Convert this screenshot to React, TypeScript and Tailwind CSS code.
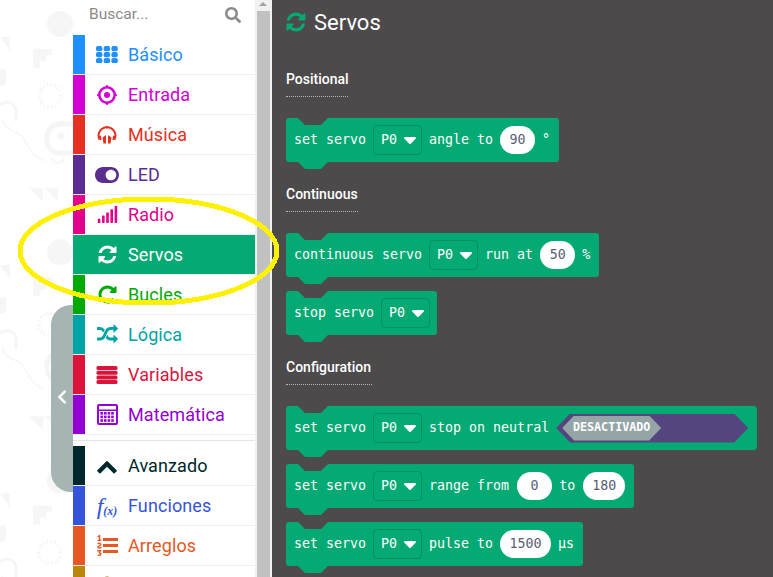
import React from 'react';
import { FaSearch, FaSignal, FaToggleOn, FaChevronLeft, FaFont } from 'react-icons/fa';

// older font awesome glyphs, the toolbox was drawn with these
const SYNC = 'M1639 1056q0 5-1 7-64 268-268 434.5t-478 166.5q-146 0-282.5-55t-243.5-157l-129 129q-19 19-45 19t-45-19-19-45v-448q0-26 19-45t45-19h448q26 0 45 19t19 45-19 45l-137 137q71 66 161 102t187 36q134 0 250-65t186-179q11-17 53-117 8-23 30-23h192q13 0 22.5 9.5t9.5 22.5zm25-800v448q0 26-19 45t-45 19h-448q-26 0-45-19t-19-45 19-45l138-138q-148-137-349-137-134 0-250 65t-186 179q-11 17-53 117-8 23-30 23h-199q-13 0-22.5-9.5t-9.5-22.5v-7q65-268 270-434.5t480-166.5q146 0 284 55.5t245 156.5l130-129q19-19 45-19t45 19 19 45z';
const REPEAT = 'M1664 256v448q0 26-19 45t-45 19h-448q-42 0-59-40-17-39 14-69l138-138q-148-137-349-137-104 0-198.5 40.5t-163.5 109.5-109.5 163.5-40.5 198.5 40.5 198.5 109.5 163.5 163.5 109.5 198.5 40.5q119 0 225-52t179-147q7-10 23-12 15 0 25 9l137 138q9 8 9.5 20.5t-7.5 22.5q-109 132-264 204.5t-327 72.5q-156 0-298-61t-245-164-164-245-61-298 61-298 164-245 245-164 298-61q147 0 284.5 55.5t244.5 156.5l130-129q29-31 70-14 39 17 39 59z';
const RANDOM = 'M666 481q-60 92-137 273-22-45-37-72.5t-40.5-63.5-51-56.5-63-35-81.5-14.5h-224q-14 0-23-9t-9-23v-192q0-14 9-23t23-9h224q250 0 410 225zm1126 799q0 14-9 23l-320 320q-9 9-23 9-13 0-22.5-9.5t-9.5-22.5v-192q-32 0-85 .5t-81 1-73-1-71-5-64-10.5-63-18.5-58-28.5-59-40-55-53.5-56-69.5q59-93 136-273 22 45 37 72.5t40.5 63.5 51 56.5 63 35 81.5 14.5h256v-192q0-14 9-23t23-9q12 0 24 10l319 319q9 9 9 23zm0-896q0 14-9 23l-320 320q-9 9-23 9-13 0-22.5-9.5t-9.5-22.5v-192h-256q-48 0-87 15t-69 45-51 61.5-45 77.5q-32 62-78 171-29 66-49.5 111t-54 105-64 100-74 83-90 68.5-106.5 42-128 16.5h-224q-14 0-23-9t-9-23v-192q0-14 9-23t23-9h224q48 0 87-15t69-45 51-61.5 45-77.5q32-62 78-171 29-66 49.5-111t54-105 64-100 74-83 90-68.5 106.5-42 128-16.5h256v-192q0-14 9-23t23-9q12 0 24 10l319 319q9 9 9 23z';
const LIST_OL = 'M381 1620q0 80-54.5 126t-135.5 46q-106 0-172-66l57-88q49 45 106 45 29 0 50.5-14.5t21.5-42.5q0-64-105-56l-26-56q8-10 32.5-43.5t42.5-54 37-38.5v-1q-16 0-48.5 1t-48.5 1v53h-106v-152h333v88l-95 115q51 12 81 49t30 88zm2-627v159h-362q-6-36-6-54 0-51 23.5-93t56.5-68 66-47.5 56.5-43.5 23.5-45q0-25-14.5-38.5t-39.5-13.5q-46 0-81 58l-85-59q24-51 71.5-79.5t105.5-28.5q73 0 123 41.5t50 112.5q0 50-34 91.5t-75 64.5-75.5 50.5-35.5 52.5h127v-60h105zm1409 319v192q0 13-9.5 22.5t-22.5 9.5h-1216q-13 0-22.5-9.5t-9.5-22.5v-192q0-14 9-23t23-9h1216q13 0 22.5 9.5t9.5 22.5zm-1408-899v99h-335v-99h107q0-41 .5-122t.5-121v-12h-2q-8 17-50 54l-71-76 136-127h106v404h108zm1408 387v192q0 13-9.5 22.5t-22.5 9.5h-1216q-13 0-22.5-9.5t-9.5-22.5v-192q0-14 9-23t23-9h1216q13 0 22.5 9.5t9.5 22.5zm0-512v192q0 13-9.5 22.5t-22.5 9.5h-1216q-13 0-22.5-9.5t-9.5-22.5v-192q0-14 9-23t23-9h1216q13 0 22.5 9.5t9.5 22.5z';
const CHEVRON_UP = 'M1683 1331l-166 165q-19 19-45 19t-45-19l-531-531-531 531q-19 19-45 19t-45-19l-166-165q-19-19-19-45.5t19-45.5l742-741q19-19 45-19t45 19l742 741q19 19 19 45.5t-19 45.5z';

function Glyph({ d, size, className }: { d: string; size: number; className?: string }) {
  return (
    <svg width={size} height={size} viewBox="0 0 1792 1792" fill="currentColor" className={className}>
      <path d={d} />
    </svg>
  );
}

function BasicIcon() {
  const cells = [0, 1, 2, 3, 4, 5, 6, 7, 8];
  return (
    <svg width="22" height="17" viewBox="0 0 22 17" fill="currentColor">
      {cells.map((i) => (
        <rect key={i} x={(i % 3) * 7.7} y={Math.floor(i / 3) * 6} width="6.4" height="5.2" rx="2" />
      ))}
    </svg>
  );
}

function TargetIcon() {
  return (
    <svg width="20" height="20" viewBox="0 0 20 20" fill="currentColor">
      <circle cx="10" cy="10" r="7.7" fill="none" stroke="currentColor" strokeWidth="2.6" />
      <circle cx="10" cy="10" r="3" />
      <rect x="9.2" y="0" width="1.6" height="2" />
      <rect x="9.2" y="18" width="1.6" height="2" />
      <rect x="0" y="9.2" width="2" height="1.6" />
      <rect x="18" y="9.2" width="2" height="1.6" />
    </svg>
  );
}

function HeadphoneIcon() {
  return (
    <svg width="20" height="18" viewBox="0 0 20 18" fill="currentColor">
      <path d="M2.6 13.5A8.4 8.4 0 1 1 17.4 13.5" fill="none" stroke="currentColor" strokeWidth="2" />
      <rect x="9.3" y="0" width="1.4" height="2.5" />
      <polygon points="1,10.5 4,9.5 4.5,14 2.8,14" />
      <polygon points="19,10.5 16,9.5 15.5,14 17.2,14" />
      <polygon points="5.5,11.5 9,9 9,17.5 6.5,17.5" />
      <polygon points="14.5,11.5 11,9 11,17.5 13.5,17.5" />
    </svg>
  );
}

function VariablesIcon() {
  return (
    <svg width="22" height="18" viewBox="0 0 22 18" fill="currentColor">
      <rect x="0.5" y="0" width="21" height="4" rx="1.5" />
      <rect x="0.5" y="4.7" width="21" height="4" rx="1.5" />
      <rect x="0.5" y="9.4" width="21" height="4" rx="1.5" />
      <rect x="0.5" y="14" width="21" height="4" rx="1.5" />
    </svg>
  );
}

function CalcIcon() {
  const cells = [0, 1, 2, 3, 4, 5, 6, 7, 8, 9, 10, 11];
  return (
    <svg width="21" height="21" viewBox="0 0 21 21" fill="currentColor">
      <path d="M2 0h17a2 2 0 0 1 2 2v17a2 2 0 0 1-2 2H2a2 2 0 0 1-2-2V2a2 2 0 0 1 2-2zm0 2v3.5h17V2H2zm0 5v12h17V7H2z" fillRule="evenodd" />
      {cells.map((i) => (
        <rect key={i} x={3.4 + (i % 4) * 3.6} y={8 + Math.floor(i / 4) * 3.6} width="2.6" height="2.6" />
      ))}
    </svg>
  );
}

function FuncIcon() {
  return (
    <span className="flex items-end font-['Liberation_Serif',serif] italic leading-none">
      <span className="text-[24px] leading-none">f</span>
      <span className="text-[12px] font-bold leading-none mb-[1px]">(x)</span>
    </span>
  );
}

const mainRows = [
  { label: 'Básico', color: '#1e90ff', icon: <BasicIcon /> },
  { label: 'Entrada', color: '#d400d4', icon: <TargetIcon /> },
  { label: 'Música', color: '#e63022', icon: <HeadphoneIcon /> },
  { label: 'LED', color: '#5c2d91', icon: <FaToggleOn size={24} /> },
  { label: 'Radio', color: '#e3008c', icon: <FaSignal size={21} /> },
  { label: 'Servos', color: '#04a973', icon: <Glyph d={SYNC} size={21} />, active: true },
  { label: 'Bucles', color: '#00aa00', icon: <Glyph d={REPEAT} size={21} /> },
  { label: 'Lógica', color: '#00a4a6', icon: <Glyph d={RANDOM} size={21} /> },
  { label: 'Variables', color: '#dc143c', icon: <VariablesIcon /> },
  { label: 'Matemática', color: '#9400d3', icon: <CalcIcon /> },
];

const advancedRows = [
  { label: 'Avanzado', color: '#00272b', icon: <Glyph d={CHEVRON_UP} size={22} /> },
  { label: 'Funciones', color: '#3455db', icon: <FuncIcon /> },
  { label: 'Arreglos', color: '#e65722', icon: <Glyph d={LIST_OL} size={21} /> },
  // only the tip of this row's icon is on screen
  { label: '', color: '#b8860b', icon: <FaFont size={22} /> },
];

function ToolboxRow({ label, color, icon, active }: { label: string; color: string; icon: React.ReactNode; active?: boolean }) {
  return (
    <div
      className="h-[40px] shrink-0 flex items-stretch border-b border-[#eeeeee]"
      style={{ color: active ? '#ffffff' : color, backgroundColor: active ? color : undefined }}
    >
      <div className="w-[12px] shrink-0" style={{ backgroundColor: color }} />
      <div className="w-[43px] shrink-0 flex items-center justify-center pl-[1px]">{icon}</div>
      <span className="text-[18px] leading-[40px] tracking-[0.1px]">{label}</span>
    </div>
  );
}

function Dropdown() {
  return (
    <div className="w-[49px] h-[30px] shrink-0 flex items-center pl-[7px] gap-[7px] rounded-[4px] border border-[#038f61]">
      <span>P0</span>
      <svg width="12" height="7" viewBox="0 0 12 7" fill="#ffffff">
        <path d="M1 0h10a1 1 0 0 1 .8 1.6L7 6.5a1.3 1.3 0 0 1-2 0L.2 1.6A1 1 0 0 1 1 0z" />
      </svg>
    </div>
  );
}

function Pill({ value, w }: { value: string; w: string }) {
  return (
    <div className={`${w} h-[28px] shrink-0 rounded-full bg-white text-[#575e75] flex items-center justify-center`}>
      {value}
    </div>
  );
}

function Block({ children }: { children: React.ReactNode }) {
  return (
    <div className="relative w-fit h-[44px] flex items-center gap-[7px] pl-[8px] pr-[8.5px] rounded-[3px] bg-[#04a973] text-white font-['DejaVu_Sans_Mono',monospace] text-[13.3px] whitespace-pre">
      <svg className="absolute top-0 left-[12px]" width="30" height="7" viewBox="0 0 30 7">
        <polygon points="0,0 7,7 23,7 30,0" fill="#4d4a4b" />
      </svg>
      <svg className="absolute -bottom-[7px] left-[12px]" width="30" height="7" viewBox="0 0 30 7">
        <polygon points="0,0 30,0 23,7 7,7" fill="#04a973" />
      </svg>
      {children}
    </div>
  );
}

function SectionLabel({ text, line, top }: { text: string; line: string; top: string }) {
  return (
    <div className={top}>
      <div className="h-[20px] text-[14px] leading-[20px] text-white font-medium">{text}</div>
      <div className={`${line} mt-[7px] border-t border-dotted border-[#b5b3b3]`} />
    </div>
  );
}

function BackgroundPattern() {
  return (
    <svg className="absolute inset-0" width="73" height="577">
      <defs>
        <pattern id="tile" width="73" height="228.3" patternUnits="userSpaceOnUse">
          <circle cx="60" cy="24" r="13" fill="#f6f6f6" />
          <polygon points="0,37 10,37 10,51" fill="#f6f6f6" />
          <path d="M33 49h19v6h-6v6h-6v7h-7z" fill="#f6f6f6" />
          <path d="M0 69h6v11a6 6 0 0 1-6 6z" fill="#f6f6f6" />
          <circle cx="50" cy="96" r="11" fill="none" stroke="#f5f5f5" strokeWidth="3.5" strokeDasharray="1.6 2.1" />
          <path d="M2 118c3 14 14 12 20 18s4 16 22 25" fill="none" stroke="#f6f6f6" strokeWidth="1.5" />
          <path d="M0 105a10 10 0 0 1 16 4l0 12" fill="none" stroke="#f6f6f6" strokeWidth="3" />
          <path d="M73 124H60a13 13 0 0 0-13 13v3a13 13 0 0 0 13 13h13" fill="none" stroke="#f5f5f5" strokeWidth="5" />
          <circle cx="61" cy="136" r="3.2" fill="#f5f5f5" />
          <path d="M52 157a6 6 0 0 0 12 0" fill="none" stroke="#f5f5f5" strokeWidth="2" />
          <polygon points="29,188 43,188 43,202" fill="#f6f6f6" />
          <polygon points="45,188 58,188 58,202" fill="#f6f6f6" />
        </pattern>
      </defs>
      <rect width="73" height="577" fill="url(#tile)" />
    </svg>
  );
}

export default function App() {
  return (
    <div className="relative w-[773px] h-[577px] overflow-hidden flex bg-white font-[Roboto,sans-serif]">
      {/* editor canvas edge with the collapse handle */}
      <div className="relative w-[73px] shrink-0 pt-[305px] flex justify-end items-start">
        <BackgroundPattern />
        <div className="relative w-[22px] h-[187px] pb-[3px] rounded-l-[20px] bg-[#a6b4b4] flex items-center justify-center text-white">
          <FaChevronLeft size={16} />
        </div>
      </div>

      {/* toolbox */}
      <div className="w-[182px] shrink-0 flex flex-col bg-white">
        <div className="h-[35px] shrink-0 flex items-center justify-between pl-[16px] pr-[14px] pb-[5px] text-[#8a8a8a]">
          <span className="text-[15.5px]">Buscar...</span>
          <FaSearch size={16} />
        </div>
        {mainRows.map((r) => (
          <ToolboxRow key={r.color} {...r} />
        ))}
        <div className="h-[11px] shrink-0 flex flex-col justify-center">
          <div className="h-[1px] bg-[#e4e4e4]" />
        </div>
        {advancedRows.map((r) => (
          <ToolboxRow key={r.color} {...r} />
        ))}
      </div>

      {/* scrollbar */}
      <div className="relative w-[17px] shrink-0 bg-[#f1f1f1] px-[2px] pt-[11px]">
        <div className="absolute top-[2px] left-[4px] w-0 h-0 border-x-[4px] border-x-transparent border-b-[4px] border-b-[#a3a3a3]" />
        <div className="h-full bg-[#c1c1c1]" />
      </div>

      {/* flyout */}
      <div className="flex-1 bg-[#4d4a4b] pl-[14px] flex flex-col items-start">
        <div className="h-[44px] flex items-center gap-[7px] text-white -ml-[1px]">
          <Glyph d={SYNC} size={22} className="text-[#04a973]" />
          <span className="text-[22px]">Servos</span>
        </div>

        <SectionLabel text="Positional" line="w-[62px]" top="mt-[25px]" />
        <div className="mt-[21px]">
          <Block>
            <span>set servo</span>
            <Dropdown />
            <span>angle to</span>
            <Pill value="90" w="w-[35px]" />
            <span>°</span>
          </Block>
        </div>

        <SectionLabel text="Continuous" line="w-[72px]" top="mt-[22px]" />
        <div className="mt-[21px] flex flex-col gap-[14px]">
          <Block>
            <span>continuous servo</span>
            <Dropdown />
            <span>run at</span>
            <Pill value="50" w="w-[35px]" />
            <span>%</span>
          </Block>
          <Block>
            <span>stop servo</span>
            <div className="-mr-[2px]">
              <Dropdown />
            </div>
          </Block>
        </div>

        <SectionLabel text="Configuration" line="w-[86px]" top="mt-[22px]" />
        <div className="mt-[21px] flex flex-col gap-[14px]">
          <Block>
            <span>set servo</span>
            <Dropdown />
            <span>stop on neutral</span>
            <div className="w-[192px] h-[29px] shrink-0 bg-[#54457f] flex items-center pl-[6px] [clip-path:polygon(14px_0,calc(100%-14px)_0,100%_50%,calc(100%-14px)_100%,14px_100%,0_50%)]">
              <div className="w-[99px] h-[25px] bg-[#95a5a6] flex items-center justify-center text-[11.7px] font-bold [clip-path:polygon(12px_0,calc(100%-12px)_0,100%_50%,calc(100%-12px)_100%,12px_100%,0_50%)]">
                DESACTIVADO
              </div>
            </div>
          </Block>
          <Block>
            <span>set servo</span>
            <Dropdown />
            <span>range from</span>
            <Pill value="0" w="w-[35px] ml-[1px]" />
            <span>to</span>
            <Pill value="180" w="w-[42px] ml-[1px]" />
          </Block>
          <Block>
            <span>set servo</span>
            <Dropdown />
            <span>pulse to</span>
            <Pill value="1500" w="w-[51px]" />
            <span>µs</span>
          </Block>
        </div>
      </div>

      {/* marker ellipse over the toolbox */}
      <svg className="absolute inset-0 pointer-events-none" width="773" height="577">
        <ellipse cx="148.5" cy="251" rx="128.5" ry="52" fill="none" stroke="#fff200" strokeWidth="5" shapeRendering="crispEdges" />
      </svg>
    </div>
  );
}
